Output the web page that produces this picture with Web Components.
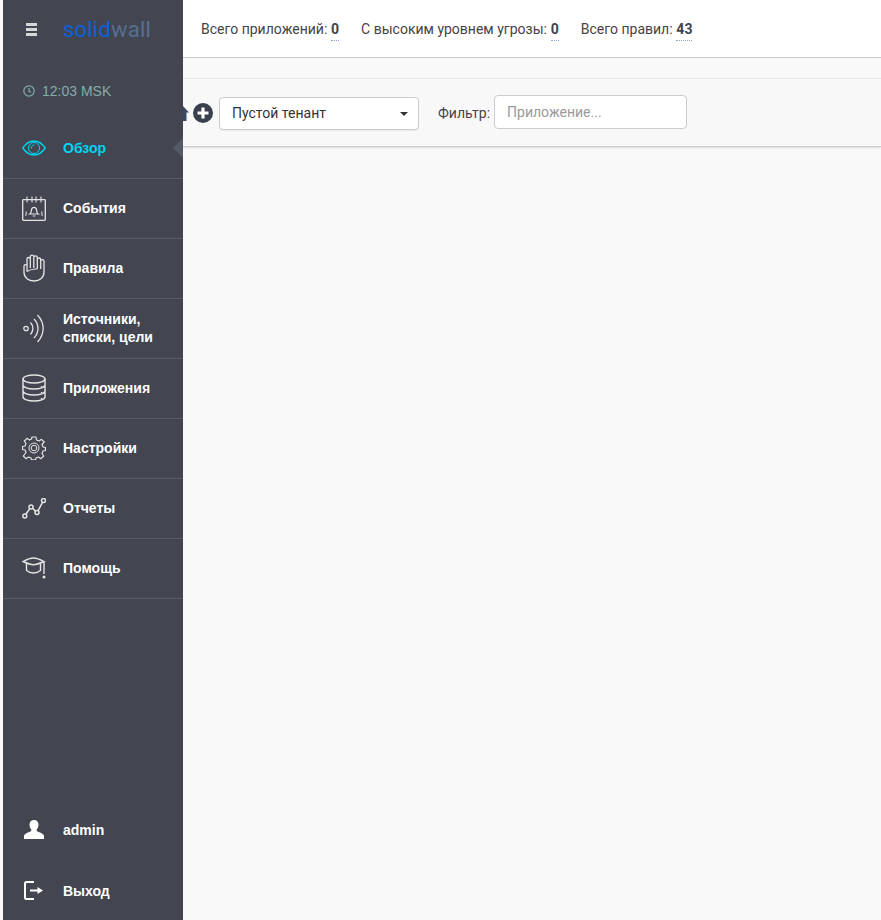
<!DOCTYPE html>
<html>
<head>
<meta charset="utf-8">
<style>
  html, body { margin: 0; height: 100%; background: #f9f9f9; font-family: Roboto, "Liberation Sans", sans-serif; overflow: hidden; }
  sw-app { height: 920px; }
</style>
</head>
<body>
<template id="sw-nav-item">
  <style>
    :host { display: flex; align-items: center; height: 60px; box-sizing: border-box; padding-bottom: 1px; border-bottom: 1px solid #585c69; position: relative; color: #fff; font: 700 14px/18px "Liberation Sans", Arial, sans-serif; }
    :host([plain]) { border-bottom: 0; padding: 2px 0 0; height: 61px; }
    :host([active]) { color: #00d4f0; }
    :host([active])::after { content: ""; position: absolute; right: 0; top: 19px; border: 10px solid transparent; border-right-color: #555a67; border-left-width: 0; }
    .icon { width: 60px; display: flex; justify-content: center; padding-left: 1px; box-sizing: border-box; }
    ::slotted(svg) { display: block; }
  </style>
  <div class="icon"><slot name="icon"></slot></div>
  <div class="label"><slot></slot></div>
</template>

<template id="sw-sidebar">
  <style>
    :host { display: flex; flex-direction: column; width: 180px; height: 920px; background: #434551; flex: none; margin-left: 3px; position: relative; z-index: 2; }
    .top { display: flex; align-items: center; height: 59px; }
    .burger { width: 11px; margin-left: 23px; display: flex; flex-direction: column; gap: 2px; }
    .burger i { display: block; height: 3px; background: #d6d6d6; }
    .logo { margin-left: 26px; font: 400 22px Roboto, sans-serif; letter-spacing: 0.2px; color: #566f92; }
    .logo b { font-weight: 400; color: #0a62d8; }
    .clock { display: flex; align-items: center; gap: 7px; height: 60px; padding: 4px 0 0 20px; box-sizing: border-box; color: #84adad; font: 400 14px "Liberation Sans", Arial, sans-serif; }
    nav { display: flex; flex-direction: column; }
    .spacer { flex: 1; }
  </style>
  <div class="top">
    <div class="burger"><i></i><i></i><i></i></div>
    <div class="logo"><b>solid</b>wall</div>
  </div>
  <div class="clock">
    <svg width="12" height="12" viewBox="0 0 12 12" fill="none" stroke="#84adad" stroke-width="1.200"><circle cx="6" cy="6" r="5.200"/><path d="M6 3v3.300l2 1"/></svg>
    <span>12:03 MSK</span>
  </div>
  <nav><slot></slot></nav>
  <div class="spacer"></div>
  <slot name="bottom"></slot>
</template>

<template id="sw-stat">
  <style>
    :host { display: inline-block; color: #444; font-size: 14px; }
    b { font-weight: 700; color: #3d4350; margin-left: .3px; border-bottom: 1px dotted #8fa5d8; padding-bottom: 3px; }
  </style>
  <slot></slot>: <b><slot name="value"></slot></b>
</template>

<template id="sw-topbar">
  <style>
    :host { display: flex; gap: 22px; align-items: center; height: 58px; box-sizing: border-box; background: #fff; border-bottom: 1px solid #c8c8c8; padding: 0 0 0 18px; }
  </style>
  <slot></slot>
</template>

<template id="sw-filterbar">
  <style>
    :host { display: flex; align-items: center; height: 69px; margin-top: 20px; box-sizing: border-box; background: #f8f8f8; border-top: 1px solid #e7e7e7; border-bottom: 1px solid #ccc; box-shadow: 0 1px 2px rgba(0,0,0,.12); position: relative; font-size: 14px; color: #444; }
    .home { position: absolute; left: -6px; top: 27px; }
    .plus { margin-left: 10px; display: block; }
    .select { margin: 2px 0 0 6px; width: 200px; height: 33px; box-sizing: border-box; border: 1px solid #ccc; border-radius: 4px; display: flex; align-items: center; justify-content: space-between; padding: 0 10px 0 12px; background: #fff; color: #333; box-shadow: 0 1px 1px rgba(0,0,0,.06); }
    .select span:first-child { margin-bottom: 2px; }
    .caret { width: 0; height: 0; border: 4px solid transparent; border-top-color: #333; border-bottom-width: 0; }
    label { margin-left: 19px; margin-right: 4px; }
    .input { width: 193px; height: 34px; margin-bottom: 1px; box-sizing: border-box; border: 1px solid #ccc; border-radius: 4px; display: flex; align-items: center; padding-left: 12px; background: #fff; color: #999; }
  </style>
  <svg class="home" width="12" height="15" viewBox="0 0 12 15"><path d="M6 0 12 6.500H9.500V15H6z" fill="#3a4a66"/></svg>
  <svg class="plus" width="20" height="20" viewBox="0 0 20 20"><circle cx="10" cy="10" r="10" fill="#3a3f4d"/><path d="M8.400 4.500h3.200v3.900h3.900v3.200h-3.900v3.900H8.400v-3.900H4.500V8.400h3.900z" fill="#fff"/></svg>
  <div class="select"><span>Пустой тенант</span><span class="caret"></span></div>
  <label>Фильтр:</label>
  <div class="input">Приложение...</div>
</template>

<template id="sw-app">
  <style>
    :host { display: flex; width: 881px; background: #f9f9f9; }
    main { flex: 1; min-width: 0; }
  </style>
  <slot name="side"></slot>
  <main><slot></slot></main>
</template>

<sw-app>
  <sw-sidebar slot="side">
    <sw-nav-item active>
      <svg slot="icon" width="24" height="16" viewBox="0 0 24 16" fill="none" stroke="#00d4f0" stroke-width="1.400"><path d="M.8 8C4 3.200 8 1 12 1s8 2.200 11.200 7C20 12.800 16 15 12 15S4 12.800.8 8z"/><circle cx="12" cy="8" r="5.500" stroke-width="1"/><path d="M9.300 8.500A3 3 0 0 1 12.500 5" stroke-width="1"/></svg>
      Обзор
    </sw-nav-item>
    <sw-nav-item>
      <svg slot="icon" width="24" height="25" viewBox="0 0 24 25" fill="none" stroke="#e4e4e4" stroke-width="1.300"><rect x=".7" y="3.700" width="22.600" height="20.600" rx=".8"/><path d="M5 .5v6M10 .5v6M14 .5v6M19 .5v6" stroke-width="1.100"/><path d="M7.800 18c1.700-1 1.400-2.500 1.700-4.300.3-1.500 1.300-2.400 2.500-2.400s2.200.9 2.500 2.400c.3 1.800 0 3.300 1.700 4.300zM10.700 20h2.600" stroke-width="1.200"/><path d="M4.300 15.500 3.800 20M19.700 15.500l.5 4.500" stroke-width="1"/></svg>
      События
    </sw-nav-item>
    <sw-nav-item>
      <svg slot="icon" width="22" height="28" viewBox="0 0 22 28" fill="none" stroke="#e4e4e4" stroke-width="1.300"><path d="M1 12c0-1.800 3-1.800 3 0v5.500M4 14V5c0-2 3.300-2 3.300 0v9M7.300 5V2.700c0-2.200 3.500-2.200 3.500 0V14M10.800 3.500c0-2.200 3.500-2.200 3.500 0V15M14.300 5.500c0-2 3.400-2 3.400 0V15M17.700 7c0-1.900 3.300-1.900 3.300 0v11c0 5.500-4 9-10 9S1 23.500 1 18v-6"/><path d="M4 17.500c3-2.200 6-2.700 10.300-2.500" stroke-width="1.100"/></svg>
      Правила
    </sw-nav-item>
    <sw-nav-item>
      <svg slot="icon" width="21" height="29" viewBox="0 0 21 29" fill="none" stroke="#e4e4e4" stroke-width="1.300"><circle cx="3" cy="14.500" r="2.200"/><path d="M7.500 8.500c3.200 3.500 3.200 8.500 0 12M11 5c5.300 5.500 5.300 13.500 0 19M14.500 1c7.500 8 7.500 19 0 27"/></svg>
      <span>Источники,<br>списки, цели</span>
    </sw-nav-item>
    <sw-nav-item>
      <svg slot="icon" width="24" height="28" viewBox="0 0 24 28" fill="none" stroke="#e4e4e4" stroke-width="1.400"><ellipse cx="12" cy="5" rx="11" ry="4"/><path d="M1 5v18c0 2.200 5 4 11 4s11-1.800 11-4V5M1 11c0 2.200 5 4 11 4s11-1.800 11-4M1 17c0 2.200 5 4 11 4s11-1.800 11-4"/><path d="M19.500 12v1.200M19.500 18v1.200M19.500 24v1.200" stroke-width="1.300"/></svg>
      Приложения
    </sw-nav-item>
    <sw-nav-item>
      <svg slot="icon" width="24" height="24" viewBox="0 0 24 24" fill="none" stroke="#e4e4e4" stroke-width="1.200"><path d="M10 1h4l.5 3 2.500 1 2.500-1.700 2.700 2.700L20 8.500l1 2.500 2.500.5v3l-2.500.5-1 2.500 1.700 2.500-2.700 2.700-2.500-1.700-2.500 1-.5 1.800h-4l-.5-1.800-2.500-1-2.500 1.700-2.700-2.700L4 16.500l-1-2.500-2.500-.5v-3L3 10l1-2.500L2.300 5 5 2.300 7.500 4l2-1z" stroke-linejoin="round"/><circle cx="12" cy="12" r="5" stroke-width="1"/><circle cx="12" cy="12" r="2.800" stroke-width="1"/></svg>
      Настройки
    </sw-nav-item>
    <sw-nav-item>
      <svg slot="icon" width="24" height="21" viewBox="0 0 24 21" fill="none" stroke="#e4e4e4" stroke-width="1.500"><circle cx="2.800" cy="18" r="2"/><circle cx="9" cy="9" r="2"/><circle cx="15" cy="14.500" r="2"/><circle cx="21.500" cy="2.500" r="2"/><path d="M3.800 16.300 7.800 10.600M10.500 10.300l3 2.800M16 12.800l4.500-8.500"/></svg>
      Отчеты
    </sw-nav-item>
    <sw-nav-item>
      <svg slot="icon" width="24" height="22" viewBox="0 0 24 22" fill="none" stroke="#e4e4e4" stroke-width="1.400"><path d="M1 4.500C6 1.800 9 1 11.500 1S17 1.800 22 4.500C17 6.800 14 7.700 11.500 7.700S6 6.800 1 4.500z"/><path d="M4.500 6.300v7.200c2 1.700 4.500 2.500 7 2.500s5-.8 7-2.500V6.300M22 5v12"/><circle cx="22" cy="20" r="1.500" fill="#e4e4e4" stroke="none"/></svg>
      Помощь
    </sw-nav-item>
    <sw-nav-item slot="bottom" plain>
      <svg slot="icon" width="20" height="19" viewBox="0 0 20 19"><path d="M10 0c2.700 0 4.500 2 4.500 4.800 0 2-.8 3.700-1.800 4.700v1.400c.8.800 7.300 2.300 7.300 5V19H0v-3.100c0-2.700 6.500-4.200 7.300-5V9.500C6.300 8.500 5.500 6.800 5.500 4.800 5.500 2 7.300 0 10 0z" fill="#fff"/></svg>
      admin
    </sw-nav-item>
    <sw-nav-item slot="bottom" plain>
      <svg slot="icon" width="19" height="19" viewBox="0 0 19 19" fill="none" stroke="#fff" stroke-width="2"><path d="M10 1H2.500A1.500 1.500 0 0 0 1 2.500v14A1.500 1.500 0 0 0 2.500 18H10M6 9.500h8"/><path d="M13.500 6v7l5.500-3.500z" fill="#fff" stroke="none"/></svg>
      Выход
    </sw-nav-item>
  </sw-sidebar>
  <sw-topbar>
    <sw-stat>Всего приложений<span slot="value">0</span></sw-stat>
    <sw-stat>С высоким уровнем угрозы<span slot="value">0</span></sw-stat>
    <sw-stat>Всего правил<span slot="value">43</span></sw-stat>
  </sw-topbar>
  <sw-filterbar></sw-filterbar>
</sw-app>

<script>
  (function() {
    function define(name) {
      customElements.define(name, class extends HTMLElement {
        constructor() {
          super();
          let tmpl = document.getElementById(name);
          this.attachShadow({mode: 'open'}).appendChild(tmpl.content.cloneNode(true));
        }
      });
    }
    ['sw-nav-item', 'sw-sidebar', 'sw-stat', 'sw-topbar', 'sw-filterbar', 'sw-app'].forEach(define);
  })();
</script>
</body>
</html>
